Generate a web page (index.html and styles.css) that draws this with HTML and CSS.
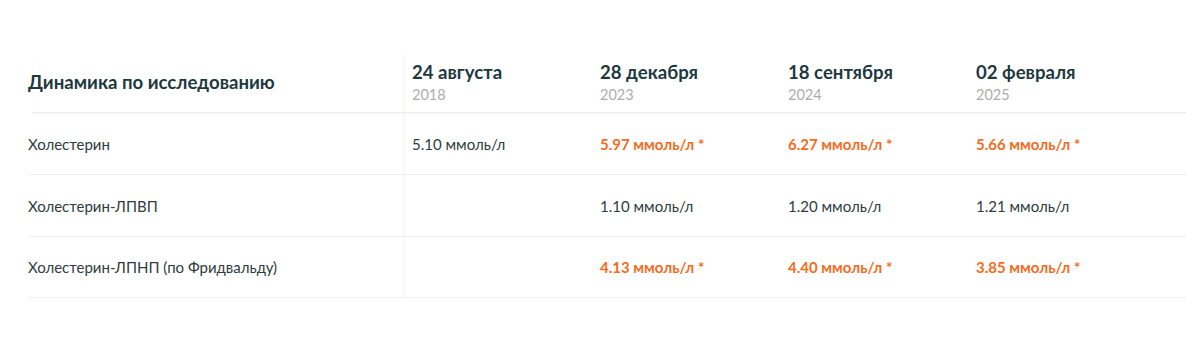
FILE: index.html
```html
<!DOCTYPE html>
<html lang="ru">
<head>
<meta charset="utf-8">
<link rel="stylesheet" href="styles.css">
</head>
<body>
<div class="table">
  <div class="row head">
    <div class="cell first"><h2 class="title">Динамика по исследованию</h2></div>
    <div class="cell date"><div class="day">24 августа</div><div class="year">2018</div></div>
    <div class="cell date"><div class="day">28 декабря</div><div class="year">2023</div></div>
    <div class="cell date"><div class="day">18 сентября</div><div class="year">2024</div></div>
    <div class="cell date"><div class="day">02 февраля</div><div class="year">2025</div></div>
  </div>
  <div class="row">
    <div class="cell first name">Холестерин</div>
    <div class="cell val">5.10 ммоль/л</div>
    <div class="cell val high">5.97 ммоль/л *</div>
    <div class="cell val high">6.27 ммоль/л *</div>
    <div class="cell val high">5.66 ммоль/л *</div>
  </div>
  <div class="row">
    <div class="cell first name">Холестерин-ЛПВП</div>
    <div class="cell val"></div>
    <div class="cell val">1.10 ммоль/л</div>
    <div class="cell val">1.20 ммоль/л</div>
    <div class="cell val">1.21 ммоль/л</div>
  </div>
  <div class="row last">
    <div class="cell first name">Холестерин-ЛПНП (по Фридвальду)</div>
    <div class="cell val"></div>
    <div class="cell val high">4.13 ммоль/л *</div>
    <div class="cell val high">4.40 ммоль/л *</div>
    <div class="cell val high">3.85 ммоль/л *</div>
  </div>
</div>
</body>
</html>
```
FILE: styles.css
```css
html, body {
  margin: 0;
  padding: 0;
  background: #fff;
}
body {
  font-family: Lato, "Open Sans", sans-serif;
  color: #22363d;
}
.table {
  margin: 55px 0 0 28px;
}
.row {
  display: grid;
  grid-template-columns: 376px 188px 188px 188px 1fr;
  height: 61px;
  border-bottom: 1px solid #eeeeee;
}
.row.head {
  height: 57px;
  border-bottom: 1px solid #ececec;
  box-shadow: 0 1px 2px rgba(0,0,0,0.04);
  margin-left: 5px;
  grid-template-columns: 371px 188px 188px 188px 1fr;
}
.row.last {
  height: 60px;
  border-bottom-color: #f2f2f2;
}
.cell {
  display: flex;
  flex-direction: column;
  justify-content: center;
  padding-left: 8px;
}
.cell.first {
  padding-left: 0;
  border-right: 1px solid #f4f4f4;
}
.head .cell.first {
  margin-left: -5px;
}
.title {
  margin: 0 0 4px;
  font-size: 18.6px;
  font-weight: 700;
  color: #1e3840;
}
.date {
  padding-bottom: 2px;
}
.day {
  font-size: 18.6px;
  font-weight: 700;
  color: #1e3840;
  line-height: 24px;
}
.year {
  font-size: 14.5px;
  color: #acacac;
  line-height: 21px;
}
.name, .val {
  font-size: 15px;
  color: #2f3b40;
}
.val.high {
  color: #f36c21;
  font-weight: 700;
}
```
